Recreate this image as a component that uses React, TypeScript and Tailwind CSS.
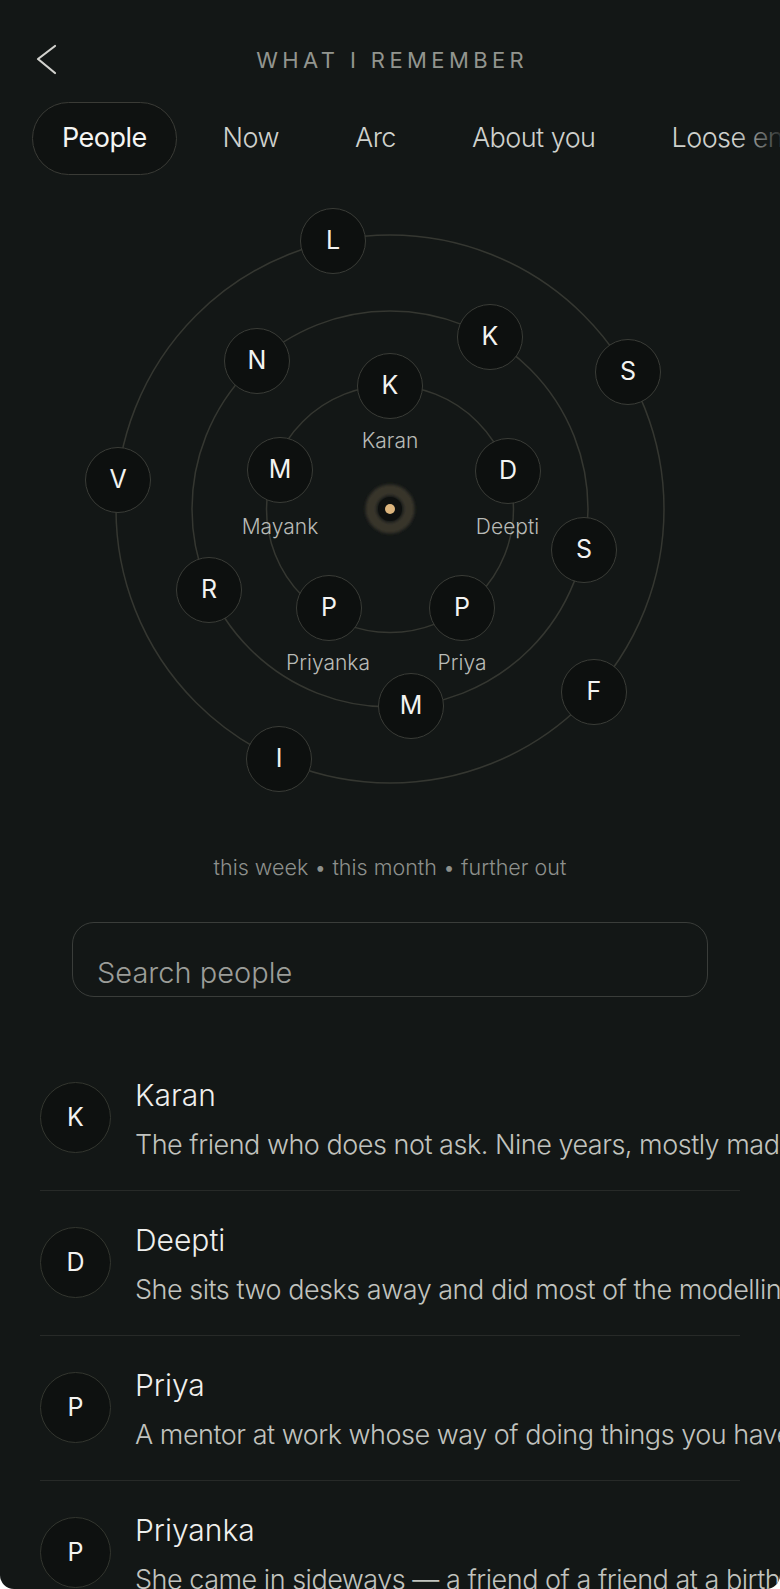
import React from 'react';

const TOP = 175;

const nodes = [
  { l: 'L', x: 333, y: 241 },
  { l: 'N', x: 257, y: 361 },
  { l: 'K', x: 490, y: 337 },
  { l: 'S', x: 628, y: 372 },
  { l: 'K', x: 390, y: 385.5 },
  { l: 'M', x: 280, y: 470 },
  { l: 'D', x: 508, y: 471 },
  { l: 'V', x: 118, y: 480 },
  { l: 'S', x: 584, y: 550 },
  { l: 'R', x: 209, y: 590 },
  { l: 'P', x: 329, y: 608 },
  { l: 'P', x: 462, y: 608 },
  { l: 'M', x: 411, y: 706 },
  { l: 'F', x: 594, y: 692 },
  { l: 'I', x: 279, y: 759 },
];

const labels = [
  { t: 'Karan', x: 390, y: 441 },
  { t: 'Mayank', x: 280, y: 527 },
  { t: 'Deepti', x: 507.5, y: 527 },
  { t: 'Priyanka', x: 328, y: 663 },
  { t: 'Priya', x: 462, y: 663 },
];

const people = [
  { i: 'K', n: 'Karan', d: 'The friend who does not ask. Nine years, mostly made of showing up.' },
  { i: 'D', n: 'Deepti', d: 'She sits two desks away and did most of the modelling on the launch.' },
  { i: 'P', n: 'Priya', d: 'A mentor at work whose way of doing things you have started to borrow.' },
  { i: 'P', n: 'Priyanka', d: 'She came in sideways — a friend of a friend at a birthday, and stayed.' },
];

const tabs = ['People', 'Now', 'Arc', 'About you', 'Loose ends'];

export default function App() {
  return (
    <div className="bg-white">
      <div className="relative h-[1589px] overflow-hidden rounded-b-[14px] bg-[#131716] font-['Inter',sans-serif] text-white">
        {/* header */}
        <div className="mt-[42px] grid h-[36px] grid-cols-[1fr_auto_1fr] items-center">
          <div className="pl-[36px]">
            <svg width="22" height="36" viewBox="0 0 22 36" fill="none">
              <polyline points="19,4 2,17 19,31" stroke="#d2d2ce" strokeWidth="2.2" strokeLinecap="round" strokeLinejoin="round" />
            </svg>
          </div>
          <div className="pl-[0.2em] text-[22px] leading-[36px] tracking-[0.2em] text-[#92958f]">WHAT I REMEMBER</div>
          <div />
        </div>

        {/* tabs */}
        <div className="relative mt-[24px] flex gap-[16px] overflow-hidden whitespace-nowrap pl-[32px]">
          {tabs.map((t, i) => (
            <div
              key={t}
              className={
                i === 0
                  ? 'flex h-[73px] shrink-0 items-center rounded-full border-[1.5px] border-[#3a3b36] bg-[#0f1211] px-[29px] text-[27px] tracking-[-0.02em] text-[#f5f5f3]'
                  : 'flex h-[73px] shrink-0 items-center rounded-full border-[1.5px] border-transparent px-[29px] text-[27px] font-light tracking-[-0.02em] text-[#cfd1cd]'
              }
            >
              {t}
            </div>
          ))}
          <div className="pointer-events-none absolute right-0 top-0 h-full w-[44px] bg-linear-to-r from-[#131716]/0 to-[#131716]/85" />
        </div>

        {/* chart */}
        <div className="relative h-[670px] w-full">
          <svg className="absolute left-0 top-0" width="780" height="670" viewBox="0 0 780 670" fill="none">
            <defs>
              <filter id="glow" x="-1" y="-1" width="3" height="3">
                <feGaussianBlur stdDeviation="1.8" />
              </filter>
            </defs>
            <circle cx="390" cy="334" r="123.5" stroke="#353731" strokeWidth="1.5" />
            <circle cx="390" cy="334" r="198" stroke="#353731" strokeWidth="1.5" />
            <circle cx="390" cy="334" r="274" stroke="#353731" strokeWidth="1.5" />
            <circle cx="390" cy="334" r="19" stroke="#37342a" strokeWidth="11" filter="url(#glow)" />
            <circle cx="390" cy="334" r="12" fill="#0e100f" />
            <circle cx="390" cy="334" r="5" fill="#dcb57d" />
          </svg>
          {nodes.map((n, i) => (
            <div
              key={i}
              className="absolute flex h-[66px] w-[66px] items-center justify-center rounded-full border-[1.5px] border-[#3a3c37] bg-[#0d100f] text-[25px] text-[#f3f3f1]"
              style={{ left: n.x - 33, top: n.y - TOP - 33 }}
            >
              {n.l}
            </div>
          ))}
          {labels.map((l) => (
            <div
              key={l.t}
              className="absolute w-[160px] text-center text-[21px] font-light leading-[28px] text-[#b9bbb7]"
              style={{ left: l.x - 80, top: l.y - TOP - 14 }}
            >
              {l.t}
            </div>
          ))}
        </div>

        {/* legend */}
        <div className="mt-[8px] text-center text-[21.5px] font-light leading-[28px] text-[#8d908c]">
          this week • this month • further out
        </div>

        {/* search */}
        <div className="mx-[72px] mt-[41px]">
          <input
            className="block h-[75px] w-full rounded-[22px] border-[1.5px] border-[#3a3d3a] bg-transparent pb-0 pl-[24px] pt-[26px] font-['Inter',sans-serif] text-[29px] font-light text-white outline-none placeholder:text-[#9b9d99]"
            placeholder="Search people"
          />
        </div>

        {/* list */}
        <div className="mt-[49px] px-[40px]">
          {people.map((p) => (
            <div key={p.n} className="flex items-start border-b border-[#272a28] pb-[27px] pt-[31px]">
              <div className="mt-[5px] flex h-[71px] w-[71px] shrink-0 items-center justify-center rounded-full border-[1.5px] border-[#33362f] bg-[#0e1110] text-[25px] text-[#f3f3f1]">
                {p.i}
              </div>
              <div className="ml-[24px] whitespace-nowrap">
                <div className="text-[30px] font-light leading-[36px] text-[#efefed]">{p.n}</div>
                <div className="mt-[14px] text-[27px] font-light leading-[36px] tracking-[-0.018em] text-[#c1c3bf]">{p.d}</div>
              </div>
            </div>
          ))}
        </div>
      </div>
    </div>
  );
}
